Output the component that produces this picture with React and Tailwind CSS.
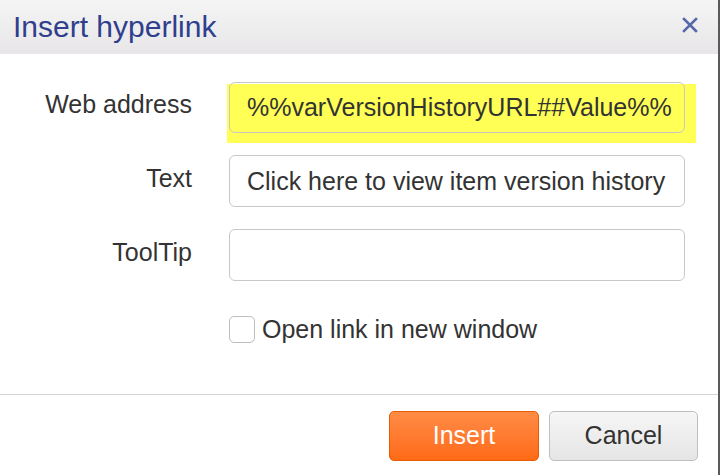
import { useState } from 'react';

export default function App() {
  const [url, setUrl] = useState("%%varVersionHistoryURL##Value%%");
  const [text, setText] = useState("Click here to view item version history");
  const [tip, setTip] = useState("");
  const [newWindow, setNewWindow] = useState(false);

  return (
    <div className="w-[721px] h-[475px] bg-white font-['Liberation_Sans',Arial,sans-serif] text-[#333]">
      <div className="w-[720px] h-full flex flex-col border-r-2 border-[#5a5a5a]">
        {/* Header */}
        <div className="h-[54px] shrink-0 flex items-center justify-between pl-[13px] pr-[20px] bg-gradient-to-b from-[#f5f5f5] to-[#e8e6e8]">
          <p className="text-[30px] leading-none text-[#2f3f8e] pb-[1px]">Insert hyperlink</p>
          <button type="button" className="w-[16px] h-[16px] mb-[4px] text-[#5867a8]" title="Close">
            <svg viewBox="0 0 16 16" className="w-4 h-4" fill="none" stroke="currentColor" strokeWidth="2.6" strokeLinecap="square">
              <path d="M2 2l12 12M14 2L2 14" />
            </svg>
          </button>
        </div>

        {/* Body */}
        <div className="flex-1 flex flex-col pt-[28px]">
          <div className="grid grid-cols-[192px_456px] gap-x-[37px] gap-y-[22px] items-center">
            <label className="text-[25px] leading-none text-right pb-[6px]">Web address</label>
            <div className="relative h-[51px]">
              <span className="absolute left-[-2px] top-[2px] right-[-11px] bottom-[-10px] bg-[#ffff55]"></span>
              <input
                value={url}
                onChange={(e) => setUrl(e.target.value)}
                className="relative w-full h-full pl-[17px] pr-[2px] rounded-[6px] border border-[#c8c8c8] bg-transparent text-[25px] text-[#333] outline-none"
                type="text"
              />
            </div>

            <label className="text-[25px] leading-none text-right pb-[6px]">Text</label>
            <input
              value={text}
              onChange={(e) => setText(e.target.value)}
              className="w-full h-[52px] pl-[17px] pr-[2px] rounded-[6px] border border-[#c8c8c8] bg-white text-[25px] text-[#333] outline-none"
              type="text"
            />

            <label className="text-[25px] leading-none text-right pb-[6px]">ToolTip</label>
            <input
              value={tip}
              onChange={(e) => setTip(e.target.value)}
              className="w-full h-[52px] pl-[17px] pr-[2px] rounded-[6px] border border-[#c8c8c8] bg-white text-[25px] text-[#333] outline-none"
              type="text"
            />

            <div></div>
            <label className="flex items-center gap-[7px] mt-[13px] cursor-pointer">
              <span
                onClick={() => setNewWindow(!newWindow)}
                className="w-[26px] h-[27px] rounded-[5px] border border-[#bdbdbd] bg-white flex items-center justify-center"
              >
                {newWindow && <span className="text-[18px] leading-none">✓</span>}
              </span>
              <span className="text-[25px] leading-none">Open link in new window</span>
            </label>
          </div>
        </div>

        {/* Footer */}
        <div className="h-[81px] shrink-0 border-t border-[#d4d4d4] flex justify-end items-start gap-[10px] pt-[16px] pr-[20px]">
          <button
            type="button"
            className="w-[150px] h-[50px] rounded-[5px] border border-[#e65c00] bg-gradient-to-b from-[#ff8b44] to-[#ff6a14] text-white text-[25px]"
          >
            Insert
          </button>
          <button
            type="button"
            className="w-[149px] h-[50px] rounded-[5px] border border-[#bfbfbf] bg-gradient-to-b from-[#f6f6f6] to-[#e5e5e5] text-[#333] text-[25px]"
          >
            Cancel
          </button>
        </div>
      </div>
    </div>
  );
}
